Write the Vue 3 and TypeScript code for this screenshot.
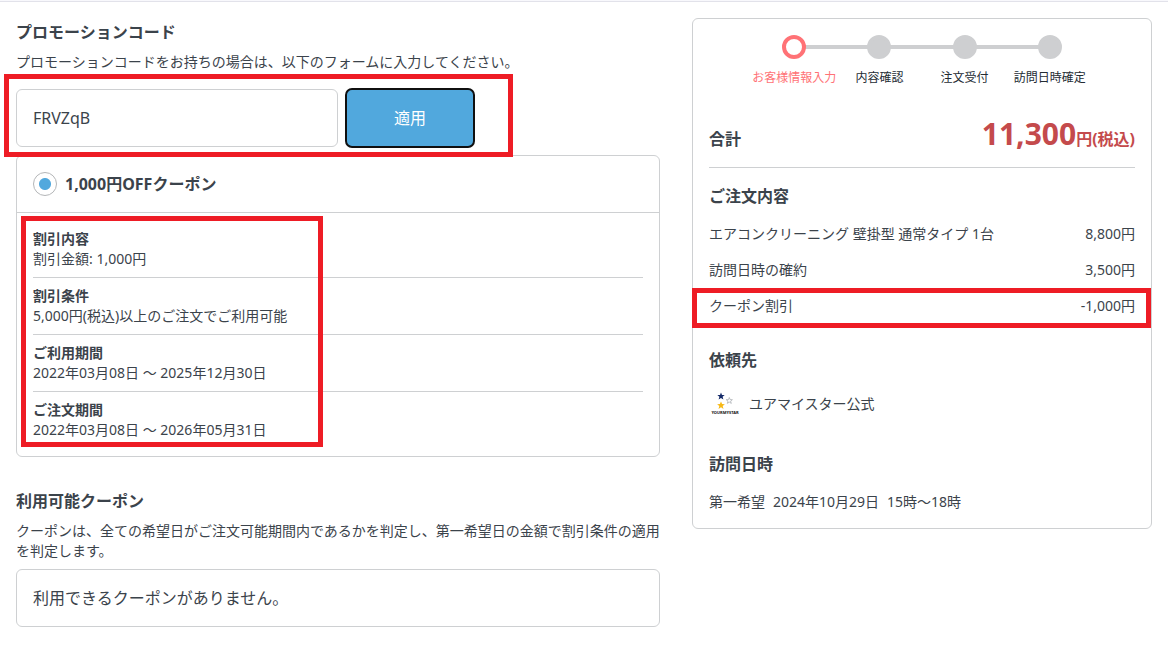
<script setup lang="ts">
import { ref } from 'vue'

interface Detail {
  title: string
  text: string
}

interface Item {
  name: string
  price: string
  marked?: boolean
}

const code = ref('FRVZqB')
const selected = ref('coupon-1000')

const details: Detail[] = [
  { title: '割引内容', text: '割引金額: 1,000円' },
  { title: '割引条件', text: '5,000円(税込)以上のご注文でご利用可能' },
  { title: 'ご利用期間', text: '2022年03月08日 〜 2025年12月30日' },
  { title: 'ご注文期間', text: '2022年03月08日 〜 2026年05月31日' },
]

const steps: string[] = ['お客様情報入力', '内容確認', '注文受付', '訪問日時確定']

const items: Item[] = [
  { name: 'エアコンクリーニング 壁掛型 通常タイプ 1台', price: '8,800円' },
  { name: '訪問日時の確約', price: '3,500円' },
  { name: 'クーポン割引', price: '-1,000円', marked: true },
]
</script>

<template>
  <div class="page" lang="ja">
    <div class="topline"></div>
    <div class="columns">
      <main>
        <section>
          <h2 class="heading"><label for="promo">プロモーションコード</label></h2>
          <p class="note">プロモーションコードをお持ちの場合は、以下のフォームに入力してください。</p>
          <form class="promo" @submit.prevent>
            <input id="promo" v-model="code" class="code" type="text" />
            <button class="apply" type="submit">適用</button>
            <span class="mark mark-form"></span>
          </form>

          <div class="box coupon">
            <label class="coupon-head">
              <input v-model="selected" type="radio" name="coupon" value="coupon-1000" />
              <span>1,000円OFFクーポン</span>
            </label>
            <div class="coupon-body">
              <dl>
                <div v-for="d in details" :key="d.title" class="detail">
                  <dt>{{ d.title }}</dt>
                  <dd>{{ d.text }}</dd>
                </div>
              </dl>
              <span class="mark mark-details"></span>
            </div>
          </div>
        </section>

        <section class="available">
          <h2 class="heading">利用可能クーポン</h2>
          <p class="note">クーポンは、全ての希望日がご注文可能期間内であるかを判定し、第一希望日の金額で割引条件の適用を判定します。</p>
          <p class="box empty">利用できるクーポンがありません。</p>
        </section>
      </main>

      <aside class="box summary">
        <ol class="steps">
          <li v-for="(s, i) in steps" :key="s" :class="{ current: i === 0 }">
            <span class="dot"></span>
            <span class="step-label">{{ s }}</span>
          </li>
        </ol>

        <div class="total">
          <h2>合計</h2>
          <p class="price"><strong>11,300</strong>円(税込)</p>
        </div>

        <h2 class="order-title">ご注文内容</h2>
        <ul class="items">
          <li v-for="item in items" :key="item.name">
            <span>{{ item.name }}</span>
            <span>{{ item.price }}</span>
            <span v-if="item.marked" class="mark mark-item"></span>
          </li>
        </ul>

        <h2 class="vendor-title">依頼先</h2>
        <div class="vendor">
          <svg viewBox="0 0 32 32" width="32" height="32" aria-hidden="true">
            <path fill="#152a68" d="M12 4.5l1 2.5 2.7.1-2.1 1.7.8 2.7-2.4-1.5-2.4 1.5.8-2.7-2.1-1.7 2.7-.1z" />
            <path fill="#f7b917" d="M12 13.5l1.1 2.6 2.8.2-2.2 1.7.8 2.9-2.5-1.6-2.5 1.6.8-2.9-2.2-1.7 2.8-.2z" />
            <path fill="#fff" stroke="#a4a8ac" stroke-width=".7" d="M20.300 9.500l.8 2.100 2.300.1-1.800 1.400.7 2.300-2-1.300-2 1.300.7-2.300-1.800-1.400 2.300-.1z" />
            <text x="16" y="25.500" text-anchor="middle" class="logo-text">YOURMYSTAR</text>
          </svg>
          <span>ユアマイスター公式</span>
        </div>

        <h2 class="visit-title">訪問日時</h2>
        <p class="visit">
          <span>第一希望</span>
          <span>2024年10月29日</span>
          <span>15時〜18時</span>
        </p>
      </aside>
    </div>
  </div>
</template>

<style>
body {
  margin: 0;
  background: #fff;
}
</style>

<style scoped>
.page {
  color: #3b434b;
  font: 14px/20px "Noto Sans", "Noto Sans CJK JP", sans-serif;
}

.page * {
  box-sizing: border-box;
}

h2,
p,
ol,
ul,
dl,
dd {
  margin: 0;
  padding: 0;
}

ol,
ul {
  list-style: none;
}

h2 {
  font-size: 16px;
  line-height: 24px;
  font-weight: 700;
}

.topline {
  height: 2px;
  background: #f8f8fc;
  border-bottom: 1px solid #e2e2ea;
}

.columns {
  display: grid;
  grid-template-columns: minmax(0, 7fr) minmax(0, 5fr);
  align-items: start;
  gap: 32px;
  padding: 16px;
}

.box {
  border: 1px solid #ced0d2;
  border-radius: 6px;
}

.heading {
  line-height: 28px;
}

.note {
  margin-top: 6px;
}

.promo {
  position: relative;
  display: flex;
  gap: 8px;
  margin-top: 17px;
}

.code {
  width: 50%;
  height: 58px;
  padding: 0 16px;
  border: 1px solid #ced0d2;
  border-radius: 6px;
  background: #fff;
  color: inherit;
  font: inherit;
  font-size: 16px;
}

.apply {
  width: 128px;
  height: 58px;
  padding: 0;
  border: 0;
  border-radius: 6px;
  outline: 2px solid #101010;
  outline-offset: -1px;
  background: #51a8dd;
  color: #fff;
  font: inherit;
  font-size: 16px;
}

.mark {
  position: absolute;
  border: 5px solid #ee1c25;
  pointer-events: none;
}

.mark-form {
  top: -15px;
  bottom: -10px;
  left: -12px;
  width: 509px;
}

.mark-details {
  top: 3px;
  bottom: 9px;
  left: 4px;
  width: 302px;
}

.mark-item {
  top: 0;
  right: -16px;
  bottom: -4px;
  left: -17px;
}

.coupon {
  margin-top: 8px;
}

.coupon-head {
  display: flex;
  align-items: center;
  gap: 8px;
  padding: 16px;
  border-bottom: 1px solid #ced0d2;
  font-size: 16px;
  line-height: 24px;
  font-weight: 700;
}

.coupon-head input {
  appearance: none;
  width: 24px;
  height: 24px;
  margin: 0;
  border: 1px solid #b4b6b8;
  border-radius: 50%;
  background: #fff;
}

.coupon-head input:checked {
  background: radial-gradient(circle, #51a8dd 0 5.5px, #fff 6.5px);
}

.coupon-body {
  position: relative;
  padding: 16px;
}

.detail + .detail {
  margin-top: 8px;
  padding-top: 8px;
  border-top: 1px solid #ced0d2;
}

dt {
  font-weight: 700;
}

.available {
  margin-top: 30px;
}

.empty {
  margin-top: 8px;
  padding: 16px;
  font-size: 16px;
  line-height: 24px;
}

.summary {
  padding: 16px;
}

.steps {
  display: grid;
  grid-template-columns: repeat(4, 1fr);
  padding: 0 10%;
}

.steps li {
  position: relative;
  display: flex;
  flex-direction: column;
  align-items: center;
  gap: 9px;
}

.steps li + li::before {
  content: "";
  position: absolute;
  top: 10px;
  right: 50%;
  width: 100%;
  height: 4px;
  background: #cecfd1;
}

.dot {
  position: relative;
  z-index: 1;
  width: 24px;
  height: 24px;
  border: 4px solid #cecfd1;
  border-radius: 50%;
  background: #cecfd1;
}

.current .dot {
  border-color: #ff7276;
  background: #fff;
}

.step-label {
  color: #242c34;
  font-size: 12px;
  white-space: nowrap;
}

.current .step-label {
  color: #ff7276;
}

.total {
  display: flex;
  justify-content: space-between;
  align-items: baseline;
  margin-top: 26px;
  padding-bottom: 8px;
  border-bottom: 1px solid #ced0d2;
}

.price {
  color: #c44a4c;
  font-size: 16px;
  font-weight: 700;
  line-height: 40px;
}

.price strong {
  font-size: 30px;
  font-weight: 700;
}

.order-title {
  margin-top: 16px;
}

.items {
  margin-top: 8px;
}

.items li {
  position: relative;
  display: flex;
  justify-content: space-between;
  padding: 8px 0;
}

.vendor-title {
  margin-top: 24px;
}

.vendor {
  display: flex;
  align-items: center;
  gap: 8px;
  margin-top: 16px;
}

.logo-text {
  fill: #111;
  font: 700 4px "Noto Sans", sans-serif;
}

.visit-title {
  margin-top: 32px;
}

.visit {
  display: flex;
  gap: 8px;
  margin-top: 16px;
}
</style>
